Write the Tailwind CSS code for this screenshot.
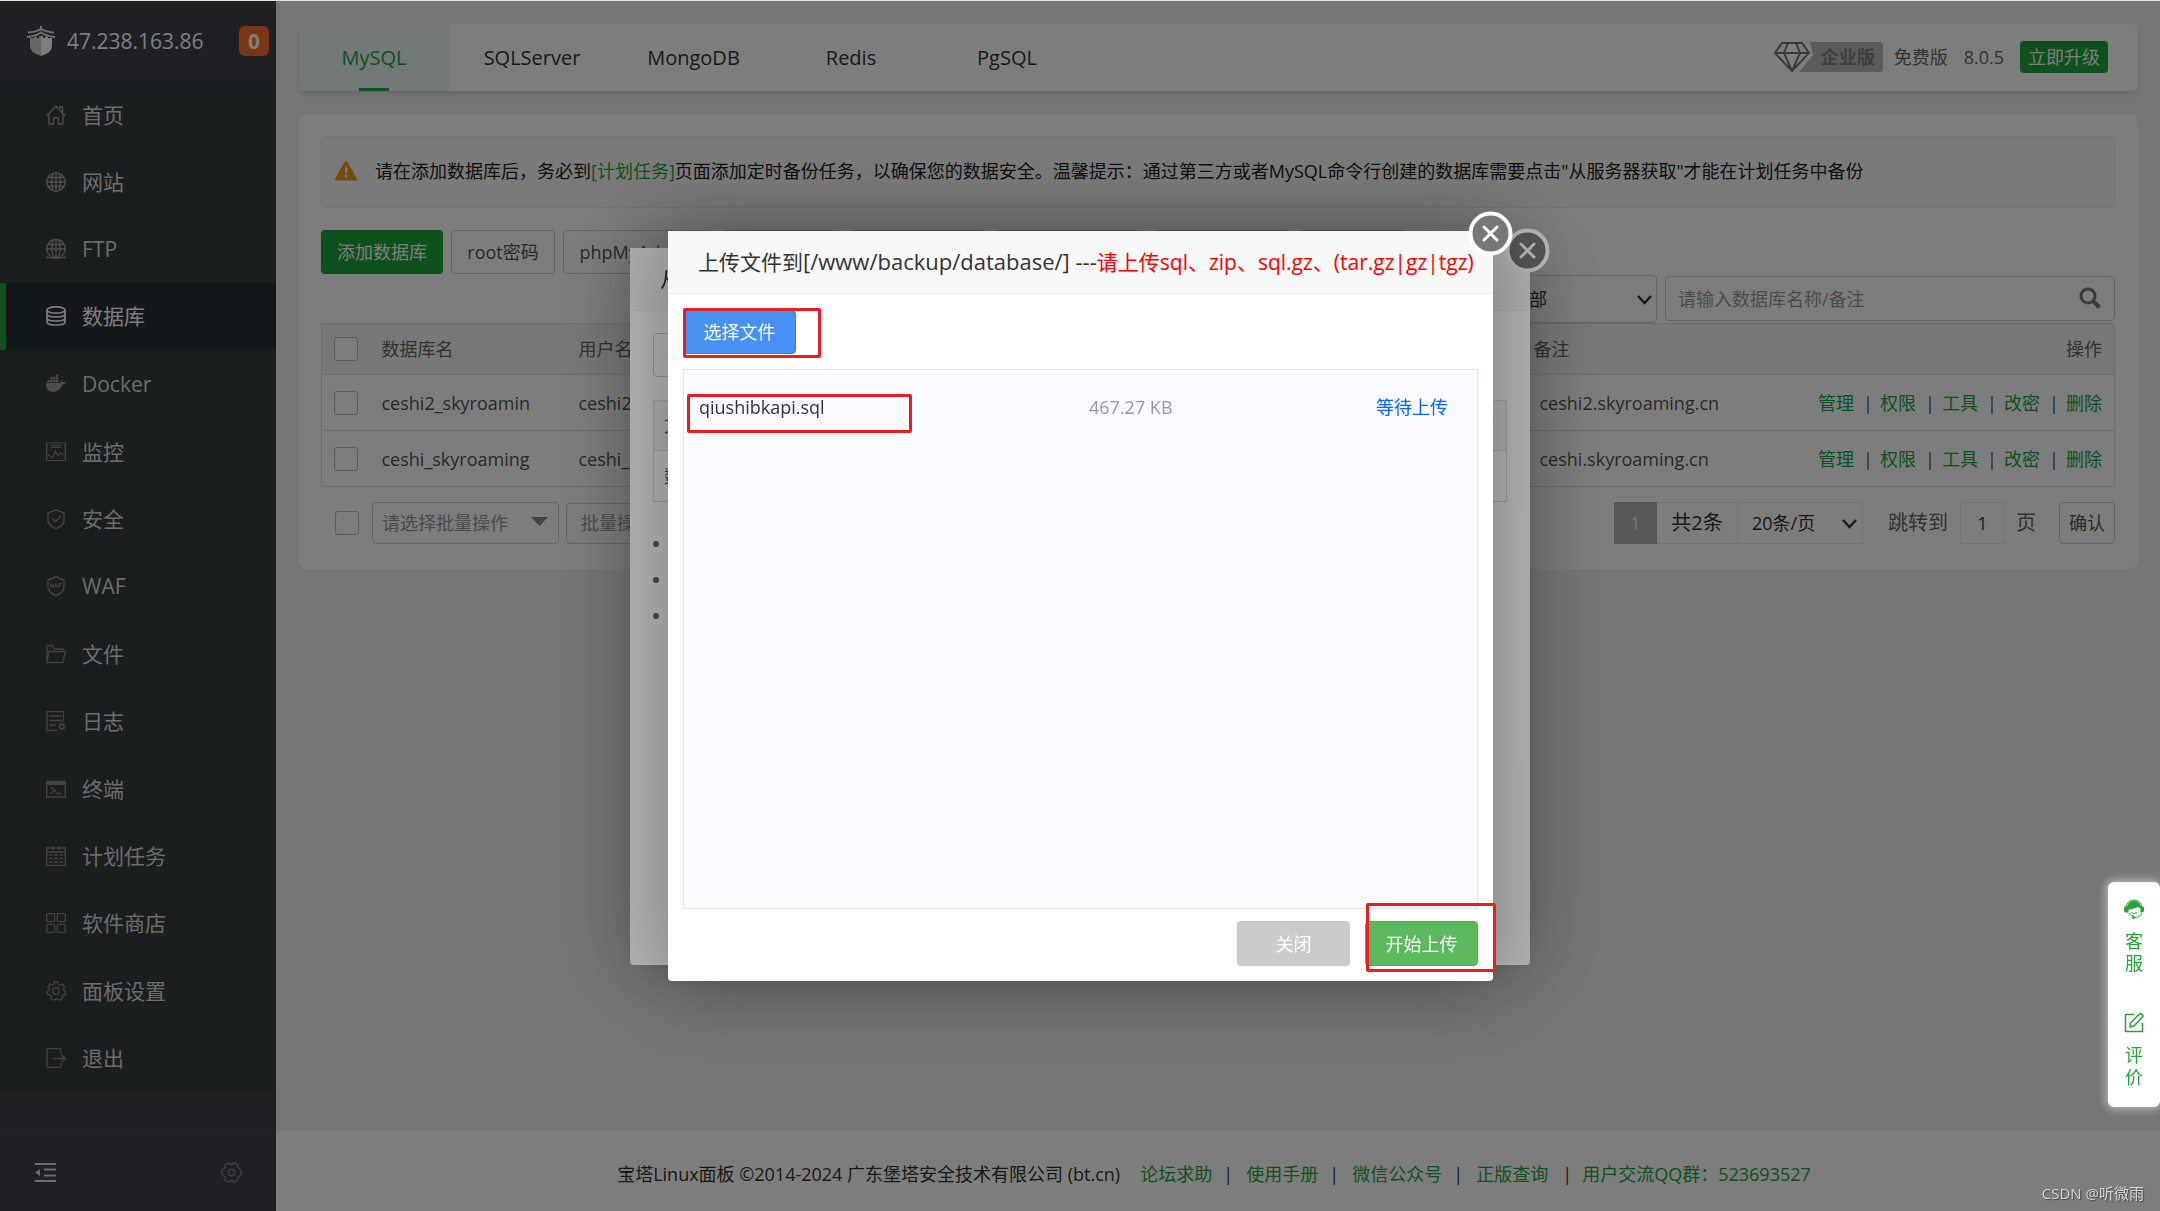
<!DOCTYPE html>
<html lang="zh-CN">
<head>
<meta charset="utf-8">
<meta name="viewport" content="width=device-width, initial-scale=1">
<title>宝塔Linux面板</title>
<script src="https://cdn.jsdelivr.net/npm/@tailwindcss/browser@4"></script>
</head>
<body class="bg-[#f1f1f1] font-['Open_Sans','Noto_Sans_CJK_SC',sans-serif] text-[18px] leading-[24px] text-[#555]">
<div class="flex min-h-screen pt-px">

  <!-- Sidebar -->
  <aside class="flex w-[276px] shrink-0 flex-col bg-[#3d434b] text-[21px] text-[#dcdcdc]">
    <div class="flex h-20 items-center pl-[27px] pr-[7px]">
      <svg class="h-[30px] w-7 shrink-0" viewBox="0 0 28 30" fill="none">
        <path d="M14 0v4M1 6.500Q9 6 14 3Q19 6 27 6.500M0 11Q9 10 14 6.500Q19 10 28 11" stroke="#e2e2e2" stroke-width="2"/>
        <path d="M3 12h4v-1.500h3V12h2v-2h2v20Q3 27 3 20Z" fill="#d2d2d2"/>
        <path d="M25 12h-4v-1.500h-3V12h-2v-2h-2v20Q25 27 25 20Z" fill="#fff"/>
      </svg>
      <span class="ml-3 flex-1 text-white">47.238.163.86</span>
      <span class="flex size-[30px] items-center justify-center rounded-md bg-[#fd6f29] font-bold text-white">0</span>
    </div>
    <nav class="grid flex-1 auto-rows-fr bg-[#373d41]">
      <a href="#" class="flex items-center gap-4 pl-[46px]"><svg class="size-5 text-[#a0a0a0]" viewBox="0 0 20 20" fill="none" stroke="currentColor" stroke-width="1.300"><path d="M.7 11 10 1l9.300 10M3 9v10h4.500v-6h5v6H17V9M13 2h3.500v5"/></svg>首页</a>
      <a href="#" class="flex items-center gap-4 pl-[46px]"><svg class="size-5 text-[#a0a0a0]" viewBox="0 0 20 20" fill="none" stroke="currentColor" stroke-width="1.300"><circle cx="10" cy="10" r="9.200"/><path d="M10 .8v18.400M.8 10h18.400M2 5.500h16M2 14.500h16M7 1.500Q4 10 7 18.500M13 1.500Q16 10 13 18.500"/></svg>网站</a>
      <a href="#" class="flex items-center gap-4 pl-[46px]"><svg class="size-5 text-[#a0a0a0]" viewBox="0 0 20 20" fill="none" stroke="currentColor" stroke-width="1.300"><path d="M4.500 17A9.200 9.200 0 1 1 15.500 17M10 .8V17M.8 10h18.400M2.500 5.500h15M7 17Q4 8 7.500 1.500M13 17Q16 8 12.500 1.500M0 18.500h6M14 18.500h6"/><path d="M6 18.500h8" stroke-width="2.500"/></svg>FTP</a>
      <a href="#" class="mb-px flex items-center gap-4 border-l-[6px] border-[#20a53a] bg-[#2c3138] pl-10 text-white"><svg class="size-5" viewBox="0 0 20 20" fill="none" stroke="currentColor" stroke-width="1.700"><ellipse cx="10" cy="4" rx="9" ry="3.200"/><path d="M1 4v12c0 4 18 4 18 0V4M1 8c0 4 18 4 18 0M1 12c0 4 18 4 18 0"/></svg>数据库</a>
      <a href="#" class="flex items-center gap-4 pl-[46px]"><svg class="size-5 text-[#a0a0a0]" viewBox="0 0 20 20" fill="currentColor"><path d="M0 9h14.500Q15.500 8 14.800 5.500Q16.500 6.500 16.800 8Q18.500 7.700 20 8.500Q19 10.500 16.500 10.500Q13.500 18 7 18Q0 18 0 9ZM1.500 6h2.300v2.300H1.500zM4.300 6h2.300v2.300H4.300zM7.100 6h2.300v2.300H7.100zM9.900 6h2.300v2.300H9.900zM4.300 3.300h2.300v2.300H4.300zM7.100 3.300h2.300v2.300H7.100zM9.900 3.300h2.300v2.300H9.900zM9.900.8h2.300v2H9.900z"/></svg>Docker</a>
      <a href="#" class="flex items-center gap-4 pl-[46px]"><svg class="size-5 text-[#888]" viewBox="0 0 20 20" fill="none" stroke="currentColor" stroke-width="1.200"><path d="M.7 1h18.600v17.500H.7zM4.500 3.500h11M4.500 5.500h11M2 12.500l3 2.500h2l2.500-6 2.500 5 2.500-3.500 1.500 2h2.500"/></svg>监控</a>
      <a href="#" class="flex items-center gap-4 pl-[46px]"><svg class="size-5 text-[#888]" viewBox="0 0 20 20" fill="none" stroke="currentColor" stroke-width="1.300"><path d="M10 .8 18 4v8q-1 5-8 7.500Q3 17 2 12V4ZM6 9.500l3.500 3L15 7"/></svg>安全</a>
      <a href="#" class="flex items-center gap-4 pl-[46px]"><svg class="size-5 text-[#888]" viewBox="0 0 20 20" fill="none" stroke="currentColor" stroke-width="1.300"><path d="M2 3.500h3V2.300h3V1h4v1.300h3v1.200h3V12q-1 5-8 7.300Q3 17 2 12Z"/><path d="m4 7.500 1 4 1-3 1 3 1-4M8.500 11.500l1.500-4 1.500 4M9 10.200h2M13 11.500v-4h3M13 9.500h2.500" stroke-width="1"/></svg>WAF</a>
      <a href="#" class="flex items-center gap-4 pl-[46px]"><svg class="size-5 text-[#888]" viewBox="0 0 20 20" fill="none" stroke="currentColor" stroke-width="1.300"><path d="M1 18.500V1.500h5L8.500 5H17v1.500M1 18.500 3 7.500h16.300l-2.300 11Z"/></svg>文件</a>
      <a href="#" class="flex items-center gap-4 pl-[46px]"><svg class="size-5 text-[#888]" viewBox="0 0 20 20" fill="none" stroke="currentColor" stroke-width="1.300"><path d="M12 19.300H1V.7h16.500v10M3.500 5h12M3.500 9.500h12M3.500 14h7"/><circle cx="16" cy="15.500" r="2.200"/><path d="M16 11.800v1.500M16 17.700v1.500M12.300 15.500h1.500M18.200 15.500h1.500M13.400 12.900l1 1M17.600 17.100l1 1M18.600 12.900l-1 1M14.400 17.100l-1 1"/></svg>日志</a>
      <a href="#" class="flex items-center gap-4 pl-[46px]"><svg class="size-5 text-[#888]" viewBox="0 0 20 20" fill="none" stroke="currentColor" stroke-width="1.300"><path d="M.7 2.500h18.600v15.500H.7z"/><path d="M.7 4h18.600" stroke-width="4"/><path d="M4.500 8.500 9 11.500l-4.500 3M9.500 14.500h5.500" stroke-width="1.500"/></svg>终端</a>
      <a href="#" class="flex items-center gap-4 pl-[46px]"><svg class="size-5 text-[#888]" viewBox="0 0 20 20" fill="none" stroke="currentColor" stroke-width="1.300"><path d="M.7 2h18.600v17.300H.7zM.7 6h18.600M7 0v4M13 0v4M3 9h3.500M8 9h4M13.500 9H17M3 12.500h3.500M8 12.500h4M13.500 12.500H17M3 16h3.500M8 16h4M13.500 16H17"/></svg>计划任务</a>
      <a href="#" class="flex items-center gap-4 pl-[46px]"><svg class="size-5 text-[#888]" viewBox="0 0 20 20" fill="none" stroke="currentColor" stroke-width="1.300"><rect x=".7" y=".7" width="8" height="8" rx="1"/><rect x="11.300" y=".7" width="8" height="8" rx="1"/><rect x=".7" y="11.300" width="8" height="8" rx="1"/><rect x="11.300" y="11.300" width="8" height="8" rx="1"/></svg>软件商店</a>
      <a href="#" class="flex items-center gap-4 pl-[46px]"><svg class="size-5 text-[#888]" viewBox="0 0 20 20" fill="none" stroke="currentColor" stroke-width="1.300" stroke-linejoin="round"><circle cx="10" cy="10" r="3.300"/><path d="M8 1h4l.5 2.200 1.500.8 2-1 2.500 3-1.200 2 .5 1.300 2 .7-.5 3.500-2.200.3-.8 1.500.5 2-3 2-1.700-1.500h-2L8 19.300 4.700 17.500l.5-2.200-1-1.500-2.500-.3L1 10.500l2-.8.3-1.700L2 6l2.500-3 2 1L8 3.200Z"/></svg>面板设置</a>
      <a href="#" class="flex items-center gap-4 pl-[46px]"><svg class="size-5 text-[#888]" viewBox="0 0 20 20" fill="none" stroke="currentColor" stroke-width="1.300"><path d="M15 6V2.200Q15 .7 13.500.7h-11Q1 .7 1 2.200v15.600q0 1.500 1.500 1.500h11q1.500 0 1.500-1.500V15M7 10.500h12M15.500 7l3.700 3.500-3.700 3.500"/></svg>退出</a>
    </nav>
    <div class="h-[39px]"></div>
    <div class="flex h-20 items-center justify-between border-t border-[#41474f] pl-[35px] pr-[34px] pt-0.5">
      <button aria-label="收起菜单"><svg class="size-[21px]" viewBox="0 0 21 21"><path d="M0 1h21v2H0zM9 6.500h12v2H9zM9 12.500h12v2H9zM0 18h21v2H0zM5 7v7L0 10.500z" fill="#dcdcdc"/></svg></button>
      <button aria-label="设置"><svg class="size-[21px]" viewBox="0 0 21 21" fill="none" stroke="#80858b" stroke-width="1.400" stroke-linejoin="round"><circle cx="10.500" cy="10.500" r="3.200"/><path d="m7 1 3.500 1.500L14 1l2.500 1.500.7 3.500 3 2.500v4l-3 2.500-.7 3.500L14 20l-3.500-1.500L7 20l-2.500-1.500-.7-3.500-3-2.500v-4l3-2.500.7-3.500Z"/></svg></button>
    </div>
  </aside>

  <div class="flex min-w-0 flex-1 flex-col">
    <main class="flex-1 pl-[23px] pr-[22px] pt-[23px]">
      <!-- Database type tabs -->
      <header class="flex h-[67px] items-stretch overflow-hidden rounded-md bg-white text-[20px] text-[#333] shadow-md">
        <nav class="flex">
          <a href="#" class="relative flex w-[150px] items-center justify-center bg-[#e9f6f2] text-[#20a53a]">MySQL<span class="absolute bottom-0 h-[3px] w-[30px] bg-[#20a53a]"></span></a>
          <a href="#" class="flex w-[166px] items-center justify-center">SQLServer</a>
          <a href="#" class="flex w-[157px] items-center justify-center">MongoDB</a>
          <a href="#" class="flex w-[158px] items-center justify-center">Redis</a>
          <a href="#" class="flex w-[154px] items-center justify-center">PgSQL</a>
        </nav>
        <div class="ml-auto flex items-center pb-0.5 pr-[30px] text-[18px] text-[#666]">
          <div class="relative flex h-[30px] w-[109px] items-center justify-end pr-2">
            <svg class="absolute inset-0 h-[30px] w-[109px]" viewBox="0 0 109 30" fill="none">
              <path d="M36 0h70q3 0 3 3v24q0 3-3 3H25l14-17Z" fill="#bababa"/>
              <path d="M8 1h20l7 10-17 18L1 11ZM1 11h34M14 1l-4 10 8 18 8-18-4-10" stroke="#777" stroke-width="2"/>
            </svg>
            <b class="relative text-[#808080]">企业版</b>
          </div>
          <span class="ml-[11px]">免费版</span>
          <span class="ml-4">8.0.5</span>
          <button class="ml-4 h-8 rounded bg-[#20a53a] px-2 text-white">立即升级</button>
        </div>
      </header>

      <section class="mt-[23px] rounded-lg bg-white pb-[25px] pl-[22px] pr-[23px] pt-[22px]">
        <div class="flex h-[72px] items-center rounded-sm border border-[#ececec] bg-[#f9f9f9] pb-0.5 pl-[13px] text-[#222]">
          <svg class="h-5 w-[22px] shrink-0" viewBox="0 0 22 20"><path d="M11 0q1 0 1.500 1L22 18q0 1.500-1 1.500H1Q0 19.500 0 18L9.500 1Q10 0 11 0Z" fill="#f0960f"/><path d="M10 6.500h2.500l-.5 6h-1.500zM10 14h2.300v2.300H10z" fill="#fff"/></svg>
          <p class="ml-[18px] whitespace-nowrap">请在添加数据库后，务必到<a href="#" class="text-[#20a53a]">[计划任务]</a>页面添加定时备份任务，以确保您的数据安全。温馨提示：通过第三方或者MySQL命令行创建的数据库需要点击"从服务器获取"才能在计划任务中备份</p>
        </div>

        <div class="mt-[22px] flex gap-2">
          <button class="h-11 w-[122px] rounded bg-[#20a53a] text-white">添加数据库</button>
          <button class="h-11 w-[104px] rounded border border-[#ccc]">root密码</button>
          <button class="h-11 w-[150px] rounded border border-[#ccc] pr-1">phpMyAdmin</button>
          <button class="h-11 w-[120px] rounded border border-[#ccc]" aria-label="远程服务器"></button>
          <button class="h-11 w-[138px] rounded border border-[#ccc]" aria-label="同步所有"></button>
          <button class="h-11 w-[150px] rounded border border-[#ccc]" aria-label="从服务器获取"></button>
          <button class="h-11 w-[138px] rounded border border-[#ccc]" aria-label="高级设置"></button>
          <button class="h-11 w-[108px] rounded border border-[#ccc]" aria-label="回收站"></button>
        </div>

        <div class="mt-px flex h-12 items-start justify-end gap-2">
          <label class="relative block h-12 w-[160px]">
            <select aria-label="数据库位置" class="size-full appearance-none rounded-sm border border-[#ccc] pl-[13px] text-[#333]"><option>全部</option></select>
            <svg class="pointer-events-none absolute right-[5px] top-5 h-[10px] w-[15px]" viewBox="0 0 15 10" fill="none" stroke="#333" stroke-width="2.500"><path d="m1 1 6.500 7L14 1"/></svg>
          </label>
          <label class="relative mt-px block h-[45px] w-[450px]">
            <input type="text" aria-label="搜索数据库" placeholder="请输入数据库名称/备注" class="size-full rounded-sm border border-[#ccc] px-3 placeholder:text-[#999]">
            <svg class="absolute right-[14px] top-[11px] size-[22px]" viewBox="0 0 22 22" fill="none" stroke="#777"><circle cx="9" cy="9" r="7" stroke-width="3"/><path d="m14 14 6.500 6.500" stroke-width="4"/></svg>
          </label>
        </div>

        <table class="w-full table-fixed border-collapse border border-[#ddd] text-left">
          <colgroup><col class="w-12"><col class="w-[197px]"><col><col class="w-[270px]"><col class="w-[325px]"></colgroup>
          <thead>
            <tr class="h-[51px] bg-[#f5f5f5] text-[#666]">
              <th class="pl-3 font-normal"><input type="checkbox" aria-label="全选" class="block size-6 appearance-none rounded-[3px] border border-[#bbb] bg-white"></th>
              <th class="pl-3 font-normal">数据库名</th><th class="pl-3 font-normal">用户名</th>
              <th class="pl-[14px] font-normal">备注</th><th class="pr-3 text-right font-normal">操作</th>
            </tr>
          </thead>
          <tbody>
            <tr class="h-14 border-t border-[#ddd]">
              <td class="pl-3"><input type="checkbox" aria-label="选择 ceshi2_skyroamin" class="block size-6 appearance-none rounded-[3px] border border-[#bbb]"></td>
              <td class="pl-3">ceshi2_skyroamin</td><td class="pl-3">ceshi2_skyroamin</td><td class="pl-5">ceshi2.skyroaming.cn</td>
              <td class="pr-3"><div class="flex justify-end gap-[9px]"><a href="#" class="text-[#20a53a]">管理</a><span class="w-2 text-center">|</span><a href="#" class="text-[#20a53a]">权限</a><span class="w-2 text-center">|</span><a href="#" class="text-[#20a53a]">工具</a><span class="w-2 text-center">|</span><a href="#" class="text-[#20a53a]">改密</a><span class="w-2 text-center">|</span><a href="#" class="text-[#20a53a]">删除</a></div></td>
            </tr>
            <tr class="h-14 border-t border-[#ddd]">
              <td class="pl-3"><input type="checkbox" aria-label="选择 ceshi_skyroaming" class="block size-6 appearance-none rounded-[3px] border border-[#bbb]"></td>
              <td class="pl-3">ceshi_skyroaming</td><td class="pl-3">ceshi_skyroaming</td><td class="pl-5">ceshi.skyroaming.cn</td>
              <td class="pr-3"><div class="flex justify-end gap-[9px]"><a href="#" class="text-[#20a53a]">管理</a><span class="w-2 text-center">|</span><a href="#" class="text-[#20a53a]">权限</a><span class="w-2 text-center">|</span><a href="#" class="text-[#20a53a]">工具</a><span class="w-2 text-center">|</span><a href="#" class="text-[#20a53a]">改密</a><span class="w-2 text-center">|</span><a href="#" class="text-[#20a53a]">删除</a></div></td>
            </tr>
          </tbody>
        </table>

        <div class="mt-[15px] flex h-[42px] items-center pl-[14px]">
          <input type="checkbox" aria-label="选择全部" class="size-6 appearance-none rounded-[3px] border border-[#bbb]">
          <label class="relative ml-[13px] block h-[42px] w-[187px]">
            <select aria-label="批量操作" class="size-full appearance-none rounded-sm border border-[#ccc] pl-[9px] text-[#999]"><option>请选择批量操作</option></select>
            <svg class="pointer-events-none absolute right-[11px] top-[15px] h-[9px] w-[17px]" viewBox="0 0 17 9"><path d="M0 0h17L8.500 9z" fill="#8a8a8a"/></svg>
          </label>
          <button class="ml-[7px] h-[41px] w-[102px] rounded border border-[#ccc] text-[#999]">批量操作</button>
          <div class="ml-auto flex h-[42px] items-center text-[#333]">
            <span class="flex h-full w-[43px] items-center justify-center bg-[#b2b2b2] text-white/80">1</span>
            <span class="flex h-full w-[81px] items-center justify-center border border-l-0 border-[#ececec] text-[20px]">共2条</span>
            <label class="relative block h-full w-[125px]">
              <select aria-label="每页条数" class="size-full appearance-none border border-l-0 border-[#ececec] pl-[14px]"><option>20条/页</option></select>
              <svg class="pointer-events-none absolute right-[6px] top-[17px] h-[10px] w-[15px]" viewBox="0 0 15 10" fill="none" stroke="#333" stroke-width="2.500"><path d="m1 1 6.500 7L14 1"/></svg>
            </label>
            <label for="page" class="ml-[25px] text-[20px] text-[#666]">跳转到</label>
            <input id="page" type="text" value="1" class="ml-3 h-full w-[45px] border border-[#ececec] text-center">
            <span class="ml-[11px] text-[20px] text-[#666]">页</span>
            <button class="ml-[23px] h-full w-[56px] rounded-sm border border-[#ccc] text-[#555]">确认</button>
          </div>
        </div>
      </section>
    </main>

    <footer class="flex h-20 items-center justify-center bg-white pr-2 pt-1.5 text-[#333]">
      <span>宝塔Linux面板 ©2014-2024 广东堡塔安全技术有限公司 (bt.cn)</span>
      <a href="#" class="ml-5 text-[#20a53a]">论坛求助</a><span class="ml-[11px] mr-[14px] w-[9px] text-center">|</span>
      <a href="#" class="text-[#20a53a]">使用手册</a><span class="ml-[11px] mr-[14px] w-[9px] text-center">|</span>
      <a href="#" class="text-[#20a53a]">微信公众号</a><span class="ml-[11px] mr-[14px] w-[9px] text-center">|</span>
      <a href="#" class="text-[#20a53a]">正版查询</a><span class="ml-[14px] mr-[11px] w-[9px] text-center">|</span>
      <a href="#" class="text-[#20a53a]">用户交流QQ群：523693527</a>
    </footer>
  </div>
</div>

<!-- Import dialog, beneath the upload dialog -->
<div class="fixed inset-0 top-px z-10 flex items-center justify-center bg-black/30">
  <section class="relative flex h-[717px] w-[900px] flex-col rounded-sm bg-white shadow-[1px_1px_75px_rgba(0,0,0,0.3)]">
    <h2 class="flex h-[63px] items-center border-b border-[#eee] bg-[#f8f8f8] px-[30px] text-[21px] text-[#333]">从</h2>
    <div class="px-[23px] pt-[22px]">
      <button class="block h-11 w-[120px] rounded border border-[#ccc]" aria-label="从本地上传"></button>
      <table class="mt-[23px] w-full border border-[#ddd] text-left">
        <thead><tr class="h-[50px] bg-[#f5f5f5]"><th class="pl-2.5 font-normal">文</th><th class="pr-3 text-right font-normal">作</th></tr></thead>
        <tbody><tr class="h-[51px] border-t border-[#ddd]"><td class="pl-2.5" colspan="2">数</td></tr></tbody>
      </table>
      <ul class="mt-6 text-[#666]">
        <li class="flex h-9 items-center"><span class="size-[6px] rounded-full bg-[#666]"></span></li>
        <li class="flex h-9 items-center"><span class="size-[6px] rounded-full bg-[#666]"></span></li>
        <li class="flex h-9 items-center"><span class="size-[6px] rounded-full bg-[#666]"></span></li>
      </ul>
    </div>
    <button aria-label="关闭导入窗口" class="absolute -right-5 -top-5 size-[45px]"><svg viewBox="0 0 45 45" fill="none"><circle cx="22.500" cy="22.500" r="20" fill="#777" stroke="#fff" stroke-width="4"/><path d="m16 16 13 13M29 16 16 29" stroke="#fff" stroke-width="3" stroke-linecap="round"/></svg></button>
  </section>
</div>

<!-- Upload dialog -->
<div class="fixed inset-0 top-px z-20 flex items-center justify-center bg-black/30 pl-px">
  <section class="relative flex h-[750px] w-[825px] flex-col rounded-sm bg-white shadow-[1px_1px_75px_rgba(0,0,0,0.3)]">
    <h2 class="flex h-[63px] items-center whitespace-nowrap border-b border-[#eee] bg-[#f8f8f8] pb-0.5 pl-[30px] text-[21px] text-[#333]"><span>上传文件到<span class="text-[22px]">[/www/backup/database/] ---</span><span class="text-[#f00]">请上传sql、zip、sql.gz、(tar.gz|gz|tgz)</span></span></h2>
    <div class="flex flex-1 flex-col px-[15px] pb-[15px] pt-4">
      <div class="relative h-11">
        <button class="h-11 w-[113px] rounded border border-[#3a7fd0] bg-[#4791f2] text-white">选择文件</button>
        <span class="absolute -top-0.5 left-0 h-[50px] w-[138px] rounded-xs border-[3px] border-[#ed1c24]"></span>
      </div>
      <div class="relative mt-[15px] flex-1 border border-[#e2e4ea] bg-[#fafbff] px-[15px] pt-[25px]">
        <ul>
          <li class="grid grid-cols-[390px_1fr_auto] pr-[14px]"><span class="text-[#333]">qiushibkapi.sql</span><span class="text-[#999]">467.27 KB</span><span class="text-[#06f]">等待上传</span></li>
        </ul>
        <span class="absolute left-[3px] top-6 h-[39px] w-[225px] rounded-xs border-[3px] border-[#ed1c24]"></span>
      </div>
      <div class="relative mt-3 flex justify-end gap-[15px]">
        <button class="h-[45px] w-[113px] rounded bg-[#cbcbcb] text-white">关闭</button>
        <button class="h-[45px] w-[113px] rounded border border-[#4cae4c] bg-[#5cb85c] text-white">开始上传</button>
        <span class="absolute -right-[18px] -top-[18px] h-[69px] w-[130px] rounded-xs border-[3px] border-[#ed1c24]"></span>
      </div>
    </div>
    <button aria-label="关闭上传窗口" class="absolute -right-5 -top-5 size-[45px]"><svg viewBox="0 0 45 45" fill="none"><circle cx="22.500" cy="22.500" r="20" fill="#777" stroke="#fff" stroke-width="4"/><path d="m16 16 13 13M29 16 16 29" stroke="#fff" stroke-width="3" stroke-linecap="round"/></svg></button>
  </section>
</div>

<!-- Support and feedback widget -->
<div class="fixed bottom-[104px] right-0 z-30 flex h-[225px] w-[52px] flex-col items-center rounded-md bg-white pt-[17px] leading-[22px] text-[#20a53a] shadow-[0_0_8px_2px_rgba(255,255,255,0.5)]">
  <a href="#" class="flex flex-col items-center"><svg class="size-5" viewBox="0 0 20 20"><path d="M1.800 8a8.300 8.300 0 0 1 16.400 0" fill="none" stroke="currentColor" stroke-width="1"/><path d="M3 7.500a7.200 7.200 0 0 1 14 0h2q1 0 1 2v2q0 2-2 2h-1.500V9.500q-1.500-.5-2.500-2-3 2.500-9.500 3v3H2q-2 0-2-2v-2q0-2 1-2Z" fill="currentColor"/><path d="M5 14q2 3 5 3M7 13.500q3 2 6 0M18 14q-2 4.500-7 4.500" fill="none" stroke="currentColor"/><circle cx="9.500" cy="18.500" r="1.500" fill="currentColor"/></svg><span class="mt-[11px] w-[18px]">客服</span></a>
  <a href="#" class="mt-[39px] flex flex-col items-center"><svg class="size-5" viewBox="0 0 20 20" fill="none" stroke="currentColor" stroke-width="1.500" stroke-linejoin="round"><path d="M10 1.500H1.500v17h17V10M6 14l.5-4L15.500 1q1.500-.7 2.700.5t.3 2.500L10 13Z"/></svg><span class="mt-[11px] w-[18px]">评价</span></a>
</div>

<div class="fixed inset-x-0 top-0 z-40 h-px bg-[#dbe3df]"></div>
<p class="fixed bottom-2 right-4 z-40 text-[15px] leading-5 text-[#d4d4d4] [text-shadow:1px_1px_1px_#444]">CSDN @听微雨</p>
</body>
</html>
